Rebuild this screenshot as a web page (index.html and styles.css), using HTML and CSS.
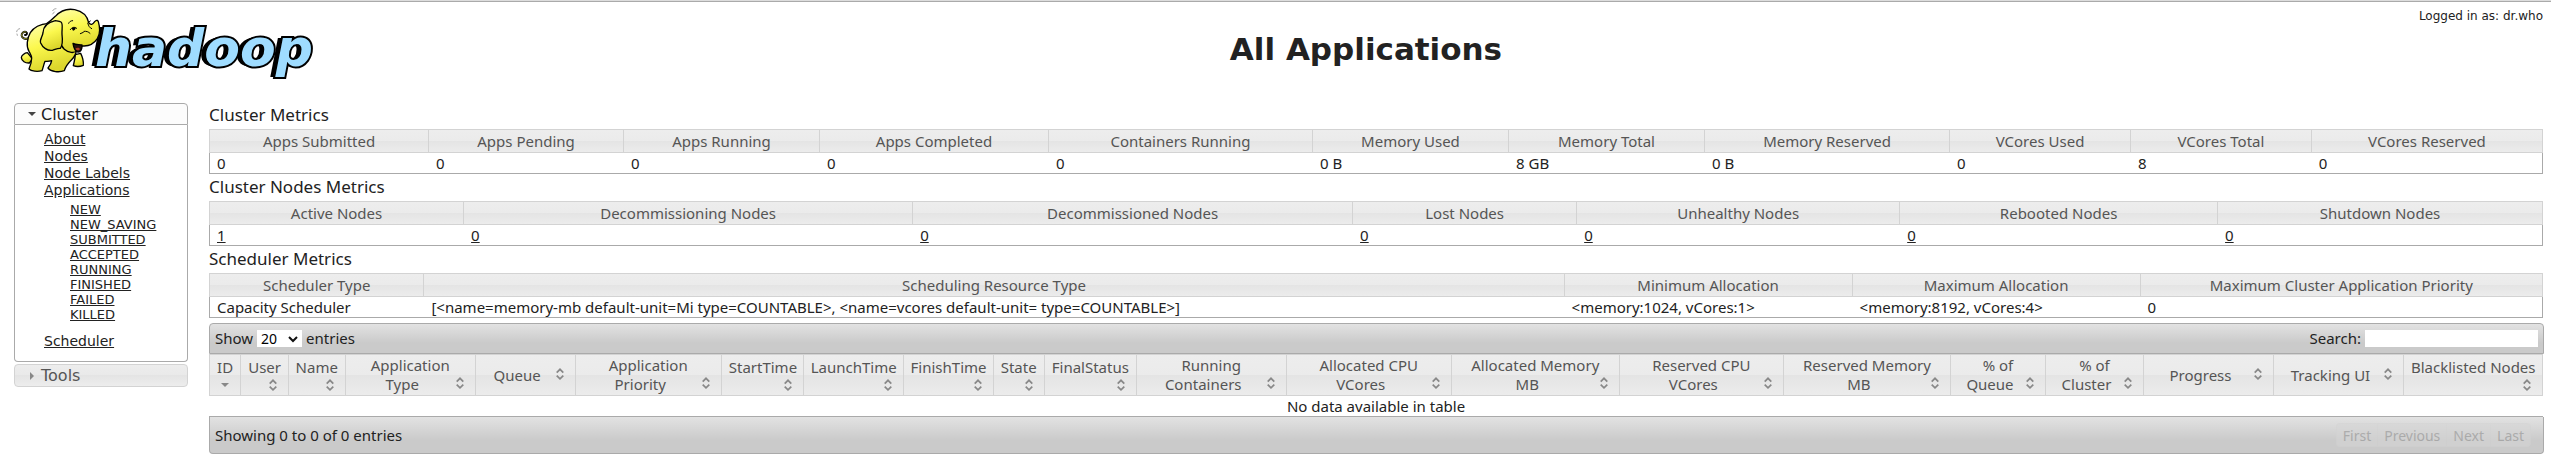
FILE: index.html
```html
<!DOCTYPE html>
<html lang="en">
<head>
<meta charset="utf-8">
<title>All Applications</title>
<link rel="stylesheet" href="styles.css">
</head>
<body>
<svg class="defs" aria-hidden="true">
  <symbol id="both" viewBox="0 0 16 16"><path d="M4.7 6.6 8 3.3l3.3 3.3M4.7 9.6 8 12.9l3.3-3.3" fill="none" stroke="#888" stroke-width="1.7"/></symbol>
  <symbol id="down" viewBox="0 0 16 16"><path d="M4 6h8l-4 4z" fill="#888"/></symbol>
</svg>
<div class="page">
  <header class="header">
    <a class="logo" href="#" aria-label="hadoop">
      <svg class="elephant" viewBox="0 0 270 216" aria-hidden="true">
        <defs><linearGradient id="skin" x1="0" y1="0" x2=".3" y2="1"><stop offset="0" stop-color="#ffffb0"/><stop offset=".5" stop-color="#fbf84e"/><stop offset="1" stop-color="#dcd62c"/></linearGradient></defs>
        <g stroke="#000" stroke-width="4" stroke-linejoin="round" stroke-linecap="round" fill="url(#skin)">
          <path d="M48 103c-8 4-17 0-19-8-1-8 7-14 13-11 5 3 3 10-3 9" fill="none" stroke-width="6"/>
          <path d="M48 103c-8 4-17 0-19-8-1-8 7-14 13-11" fill="none" stroke="#e8e440" stroke-width="2"/>
          <path d="M190 152c-1 14-4 24-6 33 8 3 20 3 30-1 1-12-2-24-8-36z"/>
          <path d="M46 146c-8 1-18 8-18 15 1 10 12 17 24 16l10-12z"/>
          <path d="M110 58c-24 2-44 10-55 28-10 17-13 42-4 56 4 8 8 14 8 20 0 12-4 24-8 33 6 7 26 9 39 5 4-10 5-19 9-28 8 1 14 0 20-2-1 8-6 16-11 22 9 12 34 14 49 8 4-14 11-22 21-32 9-9 16-18 14-30l-20-60z"/>
          <path d="M105 58c12-8 17-13 25-21 15-16 37-24 58-20 24 5 38 20 42 39 6 8 12 6 18-3 4-5 9-6 11 0 5 18 6 37-3 51-10 15-26 23-43 22-8 0-13 5-17 12-8 12-28 8-39-2-9-9-14-20-16-30z"/>
          <path d="M130 50c-22 5-36 17-37 36-1 11-11 21-7 31 6 14 20 24 35 22 8-2 16-7 24-6 8-11 7-26 5-42-1-15 4-33-3-37-5-3-11-3-17-4z"/>
          <path d="M183 118c9 5 17 3 27 5 1 12-4 22-13 21-9-4-12-13-14-26z" fill="#27120b"/>
          <path d="M190 134c5-4 11-4 14 1-2 5-9 6-14-1z" fill="#b13a24" stroke="none"/>
          <path d="M170 58c2-5 6-8 12-8M175 77c4-7 12-10 19-4M228 59c1 7 5 12 11 15M216 82c7-1 13 1 18 6M205 89l9-4M235 51l-8 6" fill="none" stroke-width="3"/>
          <path d="M179 73c4-3 8-4 12 0-1 5-5 7-8 7z" fill="#000" stroke="none"/>
          <path d="M14 83c1-5 4-8 9-9M16 94l-1-4M122 20c2-4 6-6 10-6M122 30l5-6" fill="none" stroke="#777" stroke-width="2"/>
        </g>
      </svg>
      <span class="wordmark">hadoop</span>
    </a>
    <h1 class="title">All Applications</h1>
    <div class="user">Logged in as: dr.who</div>
  </header>
  <div class="layout">
    <nav class="nav">
      <h2 class="nav-head open"><svg viewBox="0 0 16 16" aria-hidden="true"><path d="M4 6h8l-4 4z" fill="#454545"/></svg>Cluster</h2>
      <div class="nav-body">
        <ul class="links">
          <li><a href="#">About</a></li>
          <li><a href="#">Nodes</a></li>
          <li><a href="#">Node Labels</a></li>
          <li><a href="#">Applications</a>
            <ul class="states">
              <li><a href="#">NEW</a></li>
              <li><a href="#">NEW_SAVING</a></li>
              <li><a href="#">SUBMITTED</a></li>
              <li><a href="#">ACCEPTED</a></li>
              <li><a href="#">RUNNING</a></li>
              <li><a href="#">FINISHED</a></li>
              <li><a href="#">FAILED</a></li>
              <li><a href="#">KILLED</a></li>
            </ul>
          </li>
          <li><a href="#">Scheduler</a></li>
        </ul>
      </div>
      <h2 class="nav-head"><svg viewBox="0 0 16 16" aria-hidden="true"><path d="M6 4v8l4-4z" fill="#888"/></svg>Tools</h2>
    </nav>
    <main class="content">
      <h2 class="section">Cluster Metrics</h2>
      <table class="grid cluster">
        <colgroup><col><col><col><col><col><col><col><col><col><col><col></colgroup>
        <thead><tr><th>Apps Submitted</th><th>Apps Pending</th><th>Apps Running</th><th>Apps Completed</th><th>Containers Running</th><th>Memory Used</th><th>Memory Total</th><th>Memory Reserved</th><th>VCores Used</th><th>VCores Total</th><th>VCores Reserved</th></tr></thead>
        <tbody><tr><td>0</td><td>0</td><td>0</td><td>0</td><td>0</td><td>0 B</td><td>8 GB</td><td>0 B</td><td>0</td><td>8</td><td>0</td></tr></tbody>
      </table>
      <h2 class="section">Cluster Nodes Metrics</h2>
      <table class="grid nodes">
        <colgroup><col><col><col><col><col><col><col></colgroup>
        <thead><tr><th>Active Nodes</th><th>Decommissioning Nodes</th><th>Decommissioned Nodes</th><th>Lost Nodes</th><th>Unhealthy Nodes</th><th>Rebooted Nodes</th><th>Shutdown Nodes</th></tr></thead>
        <tbody><tr><td><a href="#">1</a></td><td><a href="#">0</a></td><td><a href="#">0</a></td><td><a href="#">0</a></td><td><a href="#">0</a></td><td><a href="#">0</a></td><td><a href="#">0</a></td></tr></tbody>
      </table>
      <h2 class="section">Scheduler Metrics</h2>
      <table class="grid scheduler">
        <colgroup><col><col><col><col><col></colgroup>
        <thead><tr><th>Scheduler Type</th><th>Scheduling Resource Type</th><th>Minimum Allocation</th><th>Maximum Allocation</th><th>Maximum Cluster Application Priority</th></tr></thead>
        <tbody><tr><td>Capacity Scheduler</td><td>[&lt;name=memory-mb default-unit=Mi type=COUNTABLE&gt;, &lt;name=vcores default-unit= type=COUNTABLE&gt;]</td><td>&lt;memory:1024, vCores:1&gt;</td><td>&lt;memory:8192, vCores:4&gt;</td><td>0</td></tr></tbody>
      </table>
      <div class="bar top">
        <label class="length">Show <span class="pick"><select><option>20</option><option>40</option><option>60</option><option>80</option><option>100</option></select><svg viewBox="0 0 10 8" aria-hidden="true"><path d="M1 2l4 4 4-4" fill="none" stroke="#111" stroke-width="2"/></svg></span> entries</label>
        <label class="search">Search: <input type="text"></label>
      </div>
      <table class="grid apps">
        <colgroup><col><col><col><col><col><col><col><col><col><col><col><col><col><col><col><col><col><col><col><col><col></colgroup>
        <thead><tr>
          <th><button class="sort">ID<br><svg><use href="#down"/></svg></button></th>
          <th><button class="sort">User<br><svg><use href="#both"/></svg></button></th>
          <th><button class="sort">Name<br><svg><use href="#both"/></svg></button></th>
          <th><button class="sort">Application<br><svg><use href="#both"/></svg>Type</button></th>
          <th><button class="sort"><svg><use href="#both"/></svg>Queue</button></th>
          <th><button class="sort">Application<br><svg><use href="#both"/></svg>Priority</button></th>
          <th><button class="sort">StartTime<br><svg><use href="#both"/></svg></button></th>
          <th><button class="sort">LaunchTime<br><svg><use href="#both"/></svg></button></th>
          <th><button class="sort">FinishTime<br><svg><use href="#both"/></svg></button></th>
          <th><button class="sort">State<br><svg><use href="#both"/></svg></button></th>
          <th><button class="sort">FinalStatus<br><svg><use href="#both"/></svg></button></th>
          <th><button class="sort">Running<br><svg><use href="#both"/></svg>Containers</button></th>
          <th><button class="sort">Allocated CPU<br><svg><use href="#both"/></svg>VCores</button></th>
          <th><button class="sort">Allocated Memory<br><svg><use href="#both"/></svg>MB</button></th>
          <th><button class="sort">Reserved CPU<br><svg><use href="#both"/></svg>VCores</button></th>
          <th><button class="sort">Reserved Memory<br><svg><use href="#both"/></svg>MB</button></th>
          <th><button class="sort">% of<br><svg><use href="#both"/></svg>Queue</button></th>
          <th><button class="sort">% of<br><svg><use href="#both"/></svg>Cluster</button></th>
          <th><button class="sort"><svg><use href="#both"/></svg>Progress</button></th>
          <th><button class="sort"><svg><use href="#both"/></svg>Tracking UI</button></th>
          <th><button class="sort">Blacklisted Nodes<br><svg><use href="#both"/></svg></button></th>
        </tr></thead>
        <tbody><tr><td class="empty" colspan="21">No data available in table</td></tr></tbody>
      </table>
      <div class="bar bottom">
        <div>Showing 0 to 0 of 0 entries</div>
        <div class="pager"><button disabled>First</button><button disabled>Previous</button><button disabled>Next</button><button disabled>Last</button></div>
      </div>
    </main>
  </div>
</div>
</body>
</html>
```
FILE: styles.css
```css
* { box-sizing: border-box; }
body {
  margin: 0;
  background: #fff;
  color: #222;
  font: 15px/19px "Noto Sans", "Open Sans", sans-serif;
}
a { color: #222; }
h1, h2, ul { margin: 0; padding: 0; font-weight: normal; }
ul { list-style: none; }
button, input, select { font: inherit; color: inherit; margin: 0; border: 0; border-radius: 0; }
.defs { display: none; }
.page { border-top: 1px solid #ddd; }

.header {
  display: grid;
  grid-template-columns: auto 1fr auto;
  height: 103px;
  padding: 0 8px 0 12px;
  border-top: 1px solid #aaa;
  font-family: "DejaVu Sans", sans-serif;
}
.logo { display: flex; align-items: flex-start; padding-top: 2px; text-decoration: none; }
.elephant { position: relative; z-index: 1; width: 90px; height: 72px; flex: none; }
.wordmark {
  margin: 15px 0 0 -7px;
  font: italic bold 52px/58px "DejaVu Sans", sans-serif;
  color: #9fdcff;
  -webkit-text-stroke: 4px #000;
  paint-order: stroke fill;
  text-shadow: -1px 0 #000, -2px 0 #000, -3px 0 #000, -4px 0 #000, -5px 0 #000;
}
.title { padding-top: 28px; text-align: center; font-size: 31px; line-height: 38px; font-weight: bold; }
.user { padding-top: 7px; text-align: right; font-size: 12px; line-height: 15px; }

.layout { display: grid; grid-template-columns: 174px minmax(0, 1fr); column-gap: 21px; padding: 0 7px 0 14px; }
.nav { margin-top: -1px; font-family: "DejaVu Sans", sans-serif; }
.nav-head {
  display: flex;
  align-items: center;
  height: 23px;
  padding-left: 9px;
  border: 1px solid #d3d3d3;
  border-radius: 4px;
  background: linear-gradient(#ededed, #e9e9e9 50%, #e4e4e4 50%, #ededed);
  color: #555;
  font-size: 16px;
  line-height: 21px;
}
.nav-head svg { width: 16px; height: 16px; margin-right: 1px; }
.nav-head.open { height: 22px; border-color: #aaa; border-radius: 4px 4px 0 0; background: #fcfcfc; color: #212121; }
.nav-body { margin-bottom: 2px; padding: 6px 0 11px 29px; border: 1px solid #aaa; border-top: 0; border-radius: 0 0 4px 4px; }
.links { font-size: 14px; line-height: 17px; }
.states { padding: 3px 0 11px 26px; font-size: 13px; line-height: 15px; }

.section { padding-bottom: 2px; font-size: 17px; line-height: 25px; }
.content { margin-top: -2px; }
.grid { width: calc(100% - 1px); table-layout: fixed; border-collapse: separate; border-spacing: 0; }
th {
  height: 24px;
  padding: 0;
  border: solid #d3d3d3;
  border-width: 1px 1px 1px 0;
  background: linear-gradient(#ededed, #ebebeb 50%, #e4e4e4 50%, #ececec);
  color: #555;
  font-weight: normal;
  white-space: nowrap;
}
th:first-child { border-left-width: 1px; }
td { height: 21px; padding: 0 7px; border-bottom: 1px solid #aaa; white-space: nowrap; }
td:first-child { border-left: 1px solid #aaa; }
td:last-child { border-right: 1px solid #aaa; }

.cluster col:nth-child(1) { width: 9.43%; }
.cluster col:nth-child(2) { width: 8.35%; }
.cluster col:nth-child(3) { width: 8.4%; }
.cluster col:nth-child(4) { width: 9.81%; }
.cluster col:nth-child(5) { width: 11.31%; }
.cluster col:nth-child(6) { width: 8.4%; }
.cluster col:nth-child(7) { width: 8.4%; }
.cluster col:nth-child(8) { width: 10.5%; }
.cluster col:nth-child(9) { width: 7.75%; }
.cluster col:nth-child(10) { width: 7.75%; }
.nodes col:nth-child(1) { width: 10.93%; }
.nodes col:nth-child(2) { width: 19.24%; }
.nodes col:nth-child(3) { width: 18.85%; }
.nodes col:nth-child(4) { width: 9.6%; }
.nodes col:nth-child(5) { width: 13.84%; }
.nodes col:nth-child(6) { width: 13.62%; }
.scheduler col:nth-child(1) { width: 9.23%; }
.scheduler col:nth-child(2) { width: 48.85%; }
.scheduler col:nth-child(3) { width: 12.34%; }
.scheduler col:nth-child(4) { width: 12.34%; }
.apps col:nth-child(1) { width: 1.38%; }
.apps col:nth-child(2) { width: 2.03%; }
.apps col:nth-child(3) { width: 2.45%; }
.apps col:nth-child(4) { width: 5.57%; }
.apps col:nth-child(5) { width: 4.28%; }
.apps col:nth-child(6) { width: 6.26%; }
.apps col:nth-child(7) { width: 3.51%; }
.apps col:nth-child(8) { width: 4.28%; }
.apps col:nth-child(9) { width: 3.86%; }
.apps col:nth-child(10) { width: 2.19%; }
.apps col:nth-child(11) { width: 3.94%; }
.apps col:nth-child(12) { width: 6.43%; }
.apps col:nth-child(13) { width: 7.07%; }
.apps col:nth-child(14) { width: 7.2%; }
.apps col:nth-child(15) { width: 7.03%; }
.apps col:nth-child(16) { width: 7.16%; }
.apps col:nth-child(17) { width: 4.07%; }
.apps col:nth-child(18) { width: 4.2%; }
.apps col:nth-child(19) { width: 5.57%; }
.apps col:nth-child(20) { width: 5.57%; }

.bar {
  display: flex;
  align-items: center;
  justify-content: space-between;
  padding: 0 5px;
  border: 1px solid #aaa;
  background: linear-gradient(#e2e2e2, #cacaca 65%, #cacaca);
}
.bar.top { height: 31px; margin-top: 5px; border-radius: 4px 4px 0 0; }
.bar.bottom { height: 37px; border-top: 0; border-radius: 0 0 4px 4px; }
.length, .search { display: flex; align-items: center; gap: 4px; }
.pick { position: relative; display: flex; }
.pick select { appearance: none; width: 45px; height: 17px; padding: 0 4px; background: #fff; font-size: 14px; line-height: 17px; color: #000; }
.pick svg { position: absolute; top: 5px; right: 4px; width: 10px; height: 8px; pointer-events: none; }
.search input { width: 173px; height: 17px; padding: 0 2px; background: #fff; }

.sort { display: block; width: 100%; height: 40px; padding: 1px 7px; background: none; color: #555; text-align: center; white-space: nowrap; }
.sort svg { float: right; width: 16px; height: 16px; }

.empty { text-align: center; }
td.empty { border-left: 0; border-right: 0; }

.pager { display: flex; margin-right: 7px; opacity: .5; }
.pager button { height: 24px; padding: 0 6px; border: 1px solid #d3d3d3; border-right-width: 0; background: #d6d6d6; color: #888; font-size: 14px; }
.pager button:first-child { border-radius: 4px 0 0 4px; }
.pager button:last-child { border-right-width: 1px; border-radius: 0 4px 4px 0; }
```
